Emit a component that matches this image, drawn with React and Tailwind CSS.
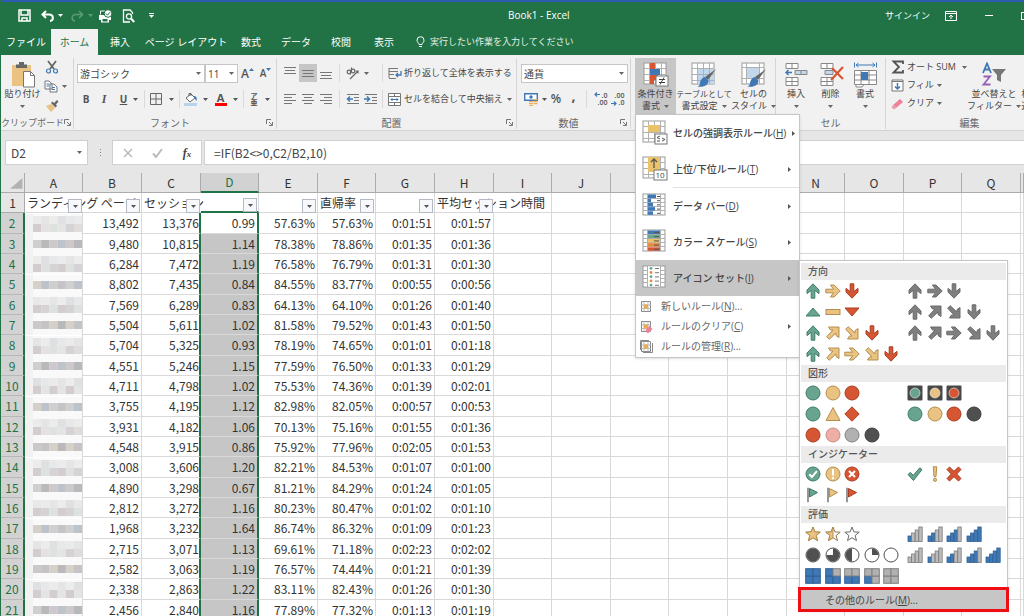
import { useState } from "react";
import clsx from "clsx";

const COLUMNS = ["A", "B", "C", "D", "E", "F", "G", "H", "I", "J", "K", "L", "M", "N", "O", "P", "Q", ""];

const COL_WIDTHS = ["w-[58px]", "w-[59px]", "w-[59px]", "w-[58px]", "w-[59px]"];

const HEADINGS = { A: "ランディング ページ", C: "セッション", F: "直帰率", H: "平均セッション時間" };

const ROWS = [
  ["13,492", "13,376", "0.99", "57.63%", "57.63%", "0:01:51", "0:01:57"],
  ["9,480", "10,815", "1.14", "78.38%", "78.86%", "0:01:35", "0:01:36"],
  ["6,284", "7,472", "1.19", "76.58%", "76.79%", "0:01:31", "0:01:30"],
  ["8,802", "7,435", "0.84", "84.55%", "83.77%", "0:00:55", "0:00:56"],
  ["7,569", "6,289", "0.83", "64.13%", "64.10%", "0:01:26", "0:01:40"],
  ["5,504", "5,611", "1.02", "81.58%", "79.52%", "0:01:43", "0:01:50"],
  ["5,704", "5,325", "0.93", "78.19%", "74.65%", "0:01:01", "0:01:18"],
  ["4,551", "5,246", "1.15", "77.59%", "76.50%", "0:01:33", "0:01:29"],
  ["4,711", "4,798", "1.02", "75.53%", "74.36%", "0:01:39", "0:02:01"],
  ["3,755", "4,195", "1.12", "82.98%", "82.05%", "0:00:57", "0:00:53"],
  ["3,931", "4,182", "1.06", "70.13%", "75.16%", "0:01:55", "0:01:36"],
  ["4,548", "3,915", "0.86", "75.92%", "77.96%", "0:02:05", "0:01:53"],
  ["3,008", "3,606", "1.20", "82.21%", "84.53%", "0:01:07", "0:01:00"],
  ["4,890", "3,298", "0.67", "81.21%", "84.29%", "0:01:24", "0:01:05"],
  ["2,812", "3,272", "1.16", "80.23%", "80.47%", "0:01:02", "0:01:10"],
  ["1,968", "3,232", "1.64", "86.74%", "86.32%", "0:01:09", "0:01:23"],
  ["2,715", "3,071", "1.13", "69.61%", "71.18%", "0:02:23", "0:02:02"],
  ["2,582", "3,063", "1.19", "76.57%", "74.44%", "0:01:21", "0:01:39"],
  ["2,338", "2,863", "1.22", "83.11%", "82.43%", "0:01:26", "0:01:30"],
  ["2,456", "2,840", "1.16", "77.89%", "77.32%", "0:01:13", "0:01:19"],
];

const GREEN = ["#68a490", "#3d7d67"];
const YELLOW = ["#eac282", "#b38f4e"];
const RED = ["#d65532", "#a93f22"];
const GRAY = ["#7f7f7f", "#6a6a6a"];
const BLACK = ["#505050", "#3c3c3c"];
const PINK = ["#edaea5", "#c98d84"];
const SILVER = ["#b1b1b1", "#808080"];
const BLUE = "#3f78b4";

const ICON_SETS = [
  {
    title: "方向",
    rows: [
      [[["arrow", GREEN, 0], ["arrow", YELLOW, 90], ["arrow", RED, 180]],
       [["arrow", GRAY, 0], ["arrow", GRAY, 90], ["arrow", GRAY, 180]]],
      [[["tri", GREEN, 0], ["dash", YELLOW], ["tri", RED, 180]],
       [["arrow", GRAY, 0], ["slant", GRAY, 0], ["slant", GRAY, 90], ["arrow", GRAY, 180]]],
      [[["arrow", GREEN, 0], ["slant", YELLOW, 0], ["slant", YELLOW, 90], ["arrow", RED, 180]],
       [["arrow", GRAY, 0], ["slant", GRAY, 0], ["arrow", GRAY, 90], ["slant", GRAY, 90], ["arrow", GRAY, 180]]],
      [[["arrow", GREEN, 0], ["slant", YELLOW, 0], ["arrow", YELLOW, 90], ["slant", YELLOW, 90], ["arrow", RED, 180]], []],
    ],
  },
  {
    title: "図形",
    rows: [
      [[["circle", GREEN], ["circle", YELLOW], ["circle", RED]],
       [["light", GREEN], ["light", YELLOW], ["light", RED]]],
      [[["circle", GREEN], ["bigTri", YELLOW], ["diamond", RED]],
       [["circle", GREEN], ["circle", YELLOW], ["circle", RED], ["circle", BLACK]]],
      [[["circle", RED], ["circle", PINK], ["circle", SILVER], ["circle", BLACK]], []],
    ],
  },
  {
    title: "インジケーター",
    rows: [
      [[["okCircle", GREEN], ["bangCircle", YELLOW], ["noCircle", RED]],
       [["check", GREEN], ["bang", YELLOW], ["cross", RED]]],
      [[["flag", GREEN], ["flag", YELLOW], ["flag", RED]], []],
    ],
  },
  {
    title: "評価",
    rows: [
      [[["star", YELLOW, 16], ["star", YELLOW, 8], ["star", YELLOW, 0]],
       [["bars", null, 1], ["bars", null, 2], ["bars", null, 3], ["bars", null, 4]]],
      [[["pie", BLACK, 4], ["pie", BLACK, 3], ["pie", BLACK, 2], ["pie", BLACK, 1], ["pie", BLACK, 0]],
       [["bars", null, 0], ["bars", null, 1], ["bars", null, 2], ["bars", null, 3], ["bars", null, 4]]],
      [[["boxes", null, 4], ["boxes", null, 3], ["boxes", null, 2], ["boxes", null, 1], ["boxes", null, 0]], []],
    ],
  },
];

const STAR = "M8 1l1.9 4.9 5.3.3-4.1 3.3 1.4 5.1L8 11.7l-4.5 2.9 1.4-5.1L.8 6.2l5.3-.3z";
const PIES = [
  "",
  "M8 8V1.5A6.5 6.5 0 0 1 14.5 8z",
  "M8 1.5A6.5 6.5 0 0 0 8 14.5z",
  "M8 8V1.5A6.5 6.5 0 1 1 1.5 8z",
  "M8 1.5a6.5 6.5 0 1 0 .01 0z",
];

function Glyph({ kind, color, value }) {
  const [fill, stroke] = color || [];
  const paint = { fill, stroke, strokeWidth: 1 };
  let body = null;

  if (kind === "arrow") {
    body = (
      <path
        d="M8 .8l6 6.2v3.6L9.8 7.4v7.8H6.2V7.4L2 10.6V7z"
        transform={`rotate(${value} 8 8)`}
        {...paint}
      />
    );
  }
  if (kind === "slant") {
    body = (
      <path
        d="M3.500 2H14v10.500l-3-2V8L4.200 14.300 1.700 11.800 8 5H5.500z"
        transform={`rotate(${value} 8 8)`}
        {...paint}
      />
    );
  }
  if (kind === "tri") body = <path d="M8 4l7 8H1z" transform={`rotate(${value} 8 8)`} {...paint} />;
  if (kind === "dash") body = <rect x="1" y="5.5" width="14" height="5" {...paint} />;
  if (kind === "circle") body = <circle cx="8" cy="8" r="7" {...paint} />;
  if (kind === "bigTri") body = <path d="M8 1.5L15 14.5H1z" {...paint} />;
  if (kind === "diamond") body = <path d="M8 .8L15.2 8 8 15.2.8 8z" {...paint} />;
  if (kind === "light") {
    body = (
      <>
        <rect x=".5" y=".5" width="15" height="15" rx="1" fill="#484848" />
        <circle cx="8" cy="8" r="5" fill={fill} stroke="#f1f1f1" strokeWidth=".6" />
      </>
    );
  }
  if (kind === "okCircle") {
    body = (
      <>
        <circle cx="8" cy="8" r="7" {...paint} />
        <path d="M4.3 8.3l2.6 2.7 5-5.8" fill="none" stroke="#fff" strokeWidth="2" />
      </>
    );
  }
  if (kind === "bangCircle") {
    body = (
      <>
        <circle cx="8" cy="8" r="7" {...paint} />
        <path d="M8 3v6.5M8 11v2.2" stroke="#fff" strokeWidth="2" />
      </>
    );
  }
  if (kind === "noCircle") {
    body = (
      <>
        <circle cx="8" cy="8" r="7" {...paint} />
        <path d="M5 5l6 6M11 5l-6 6" stroke="#fff" strokeWidth="2" />
      </>
    );
  }
  if (kind === "check") body = <path d="M1 8.5l2.3-2 3 2.8 6.5-7.5 2.2 1.8L6.5 14.5z" {...paint} />;
  if (kind === "bang") {
    body = (
      <>
        <path d="M6.3.7h3.4l-.7 10H7z" {...paint} />
        <circle cx="8" cy="13.8" r="1.6" {...paint} />
      </>
    );
  }
  if (kind === "cross") {
    body = <path d="M1 3.5L3.5 1 8 5.3 12.5 1 15 3.5 10.7 8l4.3 4.5-2.5 2.5L8 10.7 3.5 15 1 12.5 5.3 8z" {...paint} />;
  }
  if (kind === "flag") {
    body = (
      <>
        <path d="M4.5 1.5L12.5 5.5l-8 4.5z" {...paint} />
        <path d="M3 .8v14.5" stroke="#6a6a6a" strokeWidth="1.4" />
      </>
    );
  }
  if (kind === "star") {
    body = (
      <>
        <path d={STAR} fill="#fff" stroke={value ? "#8f7a50" : "#6a6a6a"} />
        {value === 16 && <path d={STAR} {...paint} />}
        {value === 8 && <path d="M8 1v10.7l-4.5 2.9 1.4-5.1L.8 6.2l5.3-.3z" {...paint} />}
      </>
    );
  }
  if (kind === "pie") {
    body = (
      <>
        <circle cx="8" cy="8" r="7" fill="#fff" stroke="#505050" />
        <path d={PIES[value]} fill="#505050" />
      </>
    );
  }
  if (kind === "bars") {
    body = [0, 1, 2, 3].map((i) => (
      <rect
        key={i}
        x={1 + i * 3.6}
        y={10 - i * 3}
        width="3.4"
        height={5.5 + i * 3}
        fill={i < value ? BLUE : "#bcbcbc"}
        stroke={i < value ? "#2f6096" : "#7c7c7c"}
        strokeWidth=".8"
      />
    ));
  }
  if (kind === "boxes") {
    // the quarters fill up from the bottom left
    const order = [[0.7, 8], [8, 8], [0.7, 0.7], [8, 0.7]];
    body = order.map(([x, y], i) => (
      <rect
        key={i}
        x={x}
        y={y}
        width="7.3"
        height="7.3"
        fill={i < value ? BLUE : "#b1b1b1"}
        stroke={i < value ? "#2f6096" : "#808080"}
      />
    ));
  }

  return (
    <svg viewBox="0 0 16 16" className="size-4">
      {body}
    </svg>
  );
}

function Caret({ className }) {
  return (
    <svg viewBox="0 0 5 3" className={clsx("h-[3px] w-[5px] shrink-0", className)} fill="currentColor">
      <path d="M0 0h5L2.5 3z" />
    </svg>
  );
}

function Divider() {
  return <span className="h-[18px] w-px shrink-0 bg-[#dadada]" />;
}

function Tool({ label, className, children }) {
  return (
    <button type="button" aria-label={label} className={clsx("flex h-[18px] shrink-0 items-center justify-center", className)}>
      {children}
    </button>
  );
}

function Group({ label, className, launcher, small, children }) {
  return (
    <section className={clsx("flex shrink-0 flex-col border-r border-[#d5d5d5]", className)}>
      <div className="flex-1">{children}</div>
      <div className={clsx("flex h-[13px] items-center leading-3 text-[#666]", small ? "text-[9px]" : "text-[10px]")}>
        <span className="flex-1 text-center whitespace-nowrap">{label}</span>
        {launcher && (
          <button type="button" aria-label={`${label}の設定`} className="mr-[3px]">
            <svg viewBox="0 0 7 7" className="size-[7px]" fill="none" stroke="#777">
              <path d="M.5 5V.5H5M3 3l3 3M6.5 3v3.5H3" />
            </svg>
          </button>
        )}
      </div>
    </section>
  );
}

function Lines({ rows }) {
  return (
    <svg viewBox="0 0 12 12" className="size-3" stroke="#777" strokeWidth="1">
      {rows.map(([x1, x2, y]) => (
        <path key={y} d={`M${x1} ${y}.5H${x2}`} />
      ))}
    </svg>
  );
}

// small worksheet outline shared by the ribbon and menu icons
function Sheet({ className, cols = [6, 12, 18], rows = [6, 12, 18], children }) {
  return (
    <svg viewBox="0 0 26 26" className={clsx("shrink-0", className || "size-[26px]")}>
      <rect x="1" y="1" width="22" height="21" fill="#fff" stroke="#999" />
      {cols.map((x) => <path key={`c${x}`} d={`M${x}.5 1v21`} stroke="#b0b0b0" />)}
      {rows.map((y) => <path key={`r${y}`} d={`M1 ${y}.5h22`} stroke="#b0b0b0" />)}
      {children}
    </svg>
  );
}

function Brush() {
  return (
    <>
      <path d="M25 7l-8 11-3-3z" fill="#666" />
      <path d="M14 15l3.500 3.500c0 5-5 7-11 6 3-1 2-3 3-5.500 1-2.500 2.500-3.500 4.500-4z" fill={BLUE} />
    </>
  );
}

function BigButton({ icon, lines, active, className, small }) {
  return (
    <button
      type="button"
      className={clsx(
        "flex h-[56px] shrink-0 flex-col items-center pt-1 leading-3 whitespace-nowrap text-[#444]",
        active && "bg-[#c6c6c6]",
        className
      )}
    >
      {icon}
      <span className={small ? "text-[8px]" : "text-[9px]"}>{lines[0]}</span>
      <span className="flex h-3 items-center gap-1 text-[9px]">
        {lines[1]}
        <Caret className="text-[#666]" />
      </span>
    </button>
  );
}

function TitleBar() {
  return (
    <header className="flex h-[27px] items-center text-[10px] text-white">
      <div className="flex w-[507px] shrink-0 items-center pl-[17px]">
        <button type="button" aria-label="上書き保存">
          <svg viewBox="0 0 13 13" className="size-[13px]" fill="none" stroke="#fff" strokeWidth="1.500">
            <path d="M1 1h11v11H1zM3 1v5h7V1M4 12V9h5v3" />
          </svg>
        </button>
        <button type="button" aria-label="元に戻す" className="ml-[10px] flex items-center gap-1">
          <svg viewBox="0 0 13 12" className="h-3 w-[13px]" fill="none" stroke="#fff" strokeWidth="2">
            <path d="M5 1L1.500 4.500 5 8M2 4.500h6c5 0 5 6 1 6.500" />
          </svg>
          <Caret />
        </button>
        <button type="button" aria-label="やり直し" className="ml-2 flex items-center gap-1 text-[#5e9a78]">
          <svg viewBox="0 0 13 12" className="h-3 w-[13px]" fill="none" stroke="currentColor" strokeWidth="1.500">
            <path d="M8 1l3.500 3.500L8 8M11 4.500H5c-5 0-5 6-1 6.500" />
          </svg>
          <Caret />
        </button>
        <button type="button" aria-label="クイック印刷" className="ml-[5px]">
          <svg viewBox="0 0 14 14" className="size-[14px]">
            <path d="M1 6h12v5h-2v2.500H3V11H1z" fill="#fff" />
            <path d="M4.500 10h5v2.500h-5z" fill="#217346" />
            <path d="M2.500 5.500V2H7" fill="none" stroke="#fff" />
            <circle cx="10" cy="4.500" r="3.800" fill="#fff" stroke="#217346" />
            <path d="M8 4.500l1.500 1.700 2.500-3" fill="none" stroke="#217346" />
          </svg>
        </button>
        <button type="button" aria-label="印刷プレビュー" className="ml-[10px]">
          <svg viewBox="0 0 13 14" className="h-[14px] w-[13px]" fill="none" stroke="#fff" strokeWidth="1.300">
            <path d="M10.500 5V3.500L8 1H1.500v12H8" />
            <circle cx="7" cy="7.500" r="2.600" />
            <path d="M9 9.500l3.200 3.500" strokeWidth="2" />
          </svg>
        </button>
        <button type="button" aria-label="カスタマイズ" className="ml-[14px] flex flex-col items-center gap-px">
          <span className="h-px w-[5px] bg-white" />
          <Caret />
        </button>
      </div>
      <h1 className="whitespace-nowrap">Book1 - Excel</h1>
      <div className="ml-auto flex items-center">
        <button type="button" className="text-[9px] whitespace-nowrap">サインイン</button>
        <button type="button" aria-label="リボンの表示オプション" className="ml-[15px]">
          <svg viewBox="0 0 12 10" className="h-[10px] w-3" fill="none" stroke="#fff">
            <path d="M.5.5h11v9H.5zM.5 2.500h11M6 8V4M4 6l2-2 2 2" />
          </svg>
        </button>
        <button type="button" aria-label="最小化" className="ml-7 h-px w-2 bg-white" />
        <button type="button" aria-label="最大化" className="ml-7 h-2 w-[3px] border border-r-0 border-white" />
      </div>
    </header>
  );
}

function Tabs({ tab, setTab }) {
  const tabs = [
    ["ファイル", "w-[50px]"],
    ["ホーム", "w-[47px]"],
    ["挿入", "w-[44px]"],
    ["ページ レイアウト", "w-[88px]"],
    ["数式", "w-[42px]"],
    ["データ", "w-[48px]"],
    ["校閲", "w-[42px]"],
    ["表示", "w-[44px]"],
  ];
  return (
    <nav className="flex h-[26px] text-[10px] text-white">
      {tabs.map(([name, width]) => (
        <button
          key={name}
          type="button"
          onClick={() => setTab(name)}
          className={clsx("shrink-0 text-center whitespace-nowrap", width, name === tab && "bg-[#f1f1f1] text-[#217346]")}
        >
          {name}
        </button>
      ))}
      <button type="button" className="ml-[10px] flex items-center gap-[5px] text-[9px] whitespace-nowrap text-[#e4f0e8]">
        <svg viewBox="0 0 9 12" className="h-3 w-[9px]" fill="none" stroke="#fff">
          <path d="M3 8.500C3 7 1 6.500 1 4.200a3.500 3.500 0 0 1 7 0C8 6.500 6 7 6 8.500zM3 10.500h3" />
        </svg>
        実行したい作業を入力してください
      </button>
    </nav>
  );
}

function Combo({ label, value, className }) {
  return (
    <span className={clsx("relative block h-[19px] shrink-0 border border-[#c6c6c6] bg-white", className)}>
      <select aria-label={label} className="block h-full w-full appearance-none pl-[2px] text-[10px] leading-4 text-[#444] outline-none">
        <option>{value}</option>
      </select>
      <Caret className="pointer-events-none absolute top-[7px] right-[3px] text-[#666]" />
    </span>
  );
}

function ClipboardGroup() {
  return (
    <Group label="クリップボード" launcher small className="w-[73px]">
      <div className="flex">
        <button type="button" className="flex w-[43px] flex-col items-center pt-1 text-[9px] leading-3 whitespace-nowrap text-[#444]">
          <svg viewBox="0 0 24 26" className="h-[26px] w-6">
            <rect x="1" y="3" width="19" height="21" fill="#eac282" />
            <path d="M5 6V2.500h3V0h5v2.500h3V6z" fill="#666" />
            <path d="M12.500 9.500h7l4 4V25h-11z" fill="#fff" stroke="#777" />
            <path d="M19.500 9.500v4h4" fill="none" stroke="#777" />
          </svg>
          貼り付け
          <Caret className="mt-[5px] text-[#666]" />
        </button>
        <div className="flex flex-col gap-px">
          <Tool label="切り取り" className="w-[15px]">
            <svg viewBox="0 0 14 14" className="size-[14px]" fill="none">
              <path d="M3 1l6 8M11 1L5 9" stroke="#666" strokeWidth="1.800" />
              <circle cx="3.500" cy="11" r="2" stroke={BLUE} strokeWidth="1.200" />
              <circle cx="10.500" cy="11" r="2" stroke={BLUE} strokeWidth="1.200" />
            </svg>
          </Tool>
          <Tool label="コピー" className="gap-1">
            <svg viewBox="0 0 14 13" className="h-[13px] w-[14px]" fill="#fff" stroke="#777">
              <path d="M1 1h4l3 3v5H1zM6 4h4l3 3v5H6z" />
              <path d="M2.500 4h3M2.500 6h3M8 7.500h3M8 9.500h3" stroke={BLUE} />
            </svg>
            <Caret className="text-[#666]" />
          </Tool>
          <Tool label="書式のコピー" className="w-[15px]">
            <svg viewBox="0 0 14 13" className="h-[13px] w-[14px]">
              <path d="M1 7l5-2 4 4-4 4z" fill="#eac282" />
              <path d="M6 4l1.500-1.500L9 4l3-3 1.500 1.500L11 5.500 12 7l-1.500 1.500z" fill="#666" />
            </svg>
          </Tool>
        </div>
      </div>
    </Group>
  );
}

function FontGroup() {
  return (
    <Group label="フォント" launcher className="w-[203px]">
      <div className="flex items-center pt-[6px] pl-[3px]">
        <Combo label="フォント" value="游ゴシック" className="w-[128px]" />
        <Combo label="フォント サイズ" value="11" className="w-[33px]" />
        <Tool label="拡大" className="w-[19px] text-[12px] font-semibold text-[#555]">
          A<Caret className="mb-2 rotate-180 text-[#3f78b4]" />
        </Tool>
        <Tool label="縮小" className="w-[17px] text-[10px] font-semibold text-[#555]">
          A<Caret className="mb-2 text-[#3f78b4]" />
        </Tool>
      </div>
      <div className="flex items-center pt-[7px] pl-[3px] text-[10px] text-[#555]">
        <Tool label="太字" className="w-[18px] font-bold">B</Tool>
        <Tool label="斜体" className="w-[18px] font-['Liberation_Serif',serif] text-[12px] font-bold italic">I</Tool>
        <Tool label="下線" className="w-[28px] gap-[6px] pl-1 font-bold">
          <span className="underline">U</span>
          <Caret />
        </Tool>
        <span className="w-1" />
        <Divider />
        <Tool label="罫線" className="w-[34px] gap-[7px]">
          <svg viewBox="0 0 12 12" className="size-3" fill="none" stroke="#666">
            <path d="M.5.5h11v11H.5zM6 .5v11M.5 6h11" />
          </svg>
          <Caret />
        </Tool>
        <Divider />
        <Tool label="塗りつぶしの色" className="w-[32px] gap-[5px]">
          <svg viewBox="0 0 14 14" className="size-[14px]">
            <path d="M2 6l5-4 4 4-5 4z" fill="#fff" stroke="#666" />
            <path d="M5 4V1.500h2V4" fill="none" stroke="#666" />
            <path d="M10 4c3 0 3 3 2.500 5-1-1-1-2-2.500-3z" fill={BLUE} />
            <path d="M0 11h13v3H0z" fill="#b8d3ec" />
          </svg>
          <Caret />
        </Tool>
        <Tool label="フォントの色" className="w-[29px] gap-[6px]">
          <span className="w-3 border-b-[3px] border-[#f00] text-center text-[11px] leading-[11px] font-bold">A</span>
          <Caret />
        </Tool>
        <span className="w-1" />
        <Divider />
        <Tool label="ふりがな" className="w-[32px] gap-[7px]">
          <span className="flex flex-col text-[7px] leading-[7px] font-bold">
            <span>ア</span>
            <span>亜</span>
          </span>
          <Caret />
        </Tool>
      </div>
    </Group>
  );
}

function AlignGroup() {
  return (
    <Group label="配置" launcher className="w-[240px]">
      <div className="flex items-center pt-[6px] pl-1">
        <Tool label="上揃え" className="w-[18px]"><Lines rows={[[0, 12, 0], [1, 11, 3], [0, 12, 6]]} /></Tool>
        <Tool label="上下中央揃え" className="w-[18px] bg-[#c6c6c6]"><Lines rows={[[0, 12, 3], [1, 11, 6], [0, 12, 9]]} /></Tool>
        <Tool label="下揃え" className="w-[18px]"><Lines rows={[[0, 12, 5], [1, 11, 8], [0, 12, 11]]} /></Tool>
        <span className="w-1" />
        <Divider />
        <Tool label="方向" className="w-[34px] gap-1 text-[#666]">
          <svg viewBox="0 0 14 13" className="h-[13px] w-[14px]" fill="none" stroke="#666" strokeWidth="1.200">
            <path d="M4 12L12 4M9.500 4H12v2.500" />
            <circle cx="3" cy="5" r="1.800" />
            <circle cx="7" cy="4" r="1.800" />
            <path d="M4.500 3.500v4M5.500.5v4" />
          </svg>
          <Caret />
        </Tool>
        <span className="w-2" />
        <Divider />
        <Tool label="折り返し" className="gap-[2px] pl-[5px] text-[9px] whitespace-nowrap text-[#444]">
          <svg viewBox="0 0 14 13" className="h-[13px] w-[14px]" fill="none" stroke="#777">
            <path d="M1 1.500h9M1 4.500h9M1 7.500h5M1 11.500h7M1 1v10" />
            <path d="M13 4v4H8.500M10 6L8 8l2 2" stroke={BLUE} strokeWidth="1.300" />
          </svg>
          折り返して全体を表示する
        </Tool>
      </div>
      <div className="flex items-center pt-2 pl-1">
        <Tool label="左揃え" className="w-[18px]"><Lines rows={[[0, 12, 1], [0, 8, 4], [0, 12, 7], [0, 8, 10]]} /></Tool>
        <Tool label="中央揃え" className="w-[18px]"><Lines rows={[[0, 12, 1], [2, 10, 4], [0, 12, 7], [2, 10, 10]]} /></Tool>
        <Tool label="右揃え" className="w-[18px]"><Lines rows={[[0, 12, 1], [4, 12, 4], [0, 12, 7], [4, 12, 10]]} /></Tool>
        <span className="w-1" />
        <Divider />
        <Tool label="インデントを減らす" className="ml-1 w-[18px]">
          <svg viewBox="0 0 14 12" className="h-3 w-[14px]" fill="none" stroke="#777">
            <path d="M1 1.500h12M8 4.500h5M8 7.500h5M1 10.500h12" />
            <path d="M7 6H1.500M4 3.500L1.500 6 4 8.500" stroke={BLUE} strokeWidth="1.500" />
          </svg>
        </Tool>
        <Tool label="インデントを増やす" className="w-[18px]">
          <svg viewBox="0 0 14 12" className="h-3 w-[14px]" fill="none" stroke="#777">
            <path d="M1 1.500h12M8 4.500h5M8 7.500h5M1 10.500h12" />
            <path d="M0 6h5.500M3 3.500L5.500 6 3 8.500" stroke={BLUE} strokeWidth="1.500" />
          </svg>
        </Tool>
        <span className="w-[2px]" />
        <Divider />
        <Tool label="セルの結合" className="gap-[3px] pl-[5px] text-[9px] whitespace-nowrap text-[#444]">
          <svg viewBox="0 0 13 13" className="size-[13px]" fill="#fff" stroke="#777">
            <path d="M.5.500h12v12H.5zM.5 3.500h12M.5 9.500h12M6.500.5v3M6.500 9.500v3" />
            <path d="M3 6.500h7M4.500 5L3 6.500 4.500 8M8.500 5L10 6.500 8.500 8" fill="none" stroke={BLUE} />
          </svg>
          セルを結合して中央揃え
          <Caret className="ml-[1px] text-[#666]" />
        </Tool>
      </div>
    </Group>
  );
}

function Decimals({ top, bottom, right }) {
  return (
    <span className="relative flex w-[14px] flex-col text-right text-[7px] leading-[7px] font-semibold">
      <span>{top}</span>
      <span>{bottom}</span>
      <svg
        viewBox="0 0 6 5"
        className={clsx("absolute left-0 h-[5px] w-[6px]", right ? "bottom-0 rotate-180" : "top-0")}
        fill="none"
        stroke={BLUE}
      >
        <path d="M6 2.500H1M3 .5L1 2.500l2 2" strokeWidth="1.200" />
      </svg>
    </span>
  );
}

function NumberGroup() {
  return (
    <Group label="数値" launcher className="w-[114px]">
      <div className="pt-[6px] pr-[2px] pl-1">
        <Combo label="表示形式" value="通貨" />
      </div>
      <div className="flex items-center pt-[7px] pl-[6px] text-[#555]">
        <Tool label="通貨表示形式" className="w-[24px] gap-1">
          <svg viewBox="0 0 14 13" className="h-[13px] w-[14px]">
            <path d="M.7.7h12.600v6.600H.7z" fill="#fff" stroke={BLUE} strokeWidth="1.400" />
            <circle cx="7" cy="4" r="1.700" fill={BLUE} />
            <path d="M5 8h4v1.300H5zM5 10h4v1.300H5zM5 12h4v1H5zM9.500 6h4v1.300h-4zM9.500 8h4v1.300h-4zM9.500 10h4v1.300h-4z" fill="#eab060" />
          </svg>
          <Caret />
        </Tool>
        <Tool label="パーセント" className="w-[18px] text-[12px] font-semibold">%</Tool>
        <Tool label="桁区切り" className="w-[17px] pb-2 text-[14px] font-bold">,</Tool>
        <span className="w-1" />
        <Divider />
        <Tool label="小数点以下の桁数を増やす" className="ml-[5px] w-[17px]"><Decimals top=".0" bottom=".00" /></Tool>
        <Tool label="小数点以下の桁数を減らす" className="w-[17px]"><Decimals top=".00" bottom=".0" right /></Tool>
      </div>
    </Group>
  );
}

function MenuItem({ icon, text, accel, tail, arrow, active, small, children }) {
  return (
    <li className="relative">
      <button
        type="button"
        className={clsx(
          "flex w-full items-center text-left whitespace-nowrap",
          small ? "h-5 gap-2 pl-1 text-[10px] text-[#666]" : "h-9 gap-[5px] pl-[6px] text-[10px] font-medium text-[#444]",
          active && "bg-[#c6c6c6] text-[#222]"
        )}
      >
        {icon}
        <span className="flex-1">
          {text}(<span className="underline">{accel}</span>){tail}
        </span>
        {arrow && <Caret className="mr-[7px] -rotate-90 text-[#555]" />}
      </button>
      {children}
    </li>
  );
}

function IconRow({ icons }) {
  return (
    <button type="button" aria-label="アイコン セット" className="grid h-[21px] w-[98px] grid-cols-5 items-center">
      {icons.map(([kind, color, value], i) => (
        <Glyph key={i} kind={kind} color={color} value={value} />
      ))}
    </button>
  );
}

function IconSetMenu() {
  return (
    <div className="absolute top-0 left-full w-[209px] border border-[#c6c6c6] bg-white px-px pt-[2px] pb-px shadow-sm">
      {ICON_SETS.map((set) => (
        <div key={set.title}>
          <h3 className="h-[17px] bg-[#ebebeb] pl-[7px] text-[10px] leading-4 font-medium text-[#555]">{set.title}</h3>
          <div className="pb-px pl-1">
            {set.rows.map(([left, right], i) => (
              <div key={i} className="flex gap-1">
                <IconRow icons={left} />
                {right.length > 0 && <IconRow icons={right} />}
              </div>
            ))}
          </div>
        </div>
      ))}
      <div className="-mx-[3px] -mb-[3px] border-[3px] border-[#f00e14]">
        <button type="button" className="block h-[19px] w-full bg-[#c6c6c6] pl-6 text-left text-[10px] leading-[18px] text-[#444]">
          その他のルール(<span className="underline">M</span>)...
        </button>
      </div>
    </div>
  );
}

function RuleIcon({ children }) {
  return (
    <svg viewBox="0 0 13 13" className="size-[13px] shrink-0">
      <path d="M1.500 1.500h9v10h-9z" fill="#fff" stroke="#888" />
      <path d="M4 1.500v10M8 1.500v10M1.500 5h9M1.500 8.500h9" stroke="#bbb" />
      <path d="M4 4.500h4v4H4z" fill="#e8ab4d" />
      {children}
    </svg>
  );
}

const SCALE = ["#3f78b4", "#68a490", "#eac26a", "#e8893c", "#d65532"];

function FormatMenu() {
  return (
    <ul className="absolute top-full left-0 z-20 w-[165px] border border-[#c6c6c6] bg-white pb-px shadow-sm">
      <MenuItem
        text="セルの強調表示ルール"
        accel="H"
        arrow
        icon={
          <Sheet>
            <rect x="6" y="5" width="12" height="7" fill="#eac26a" />
            <rect x="13" y="14" width="12" height="10" fill="#fff" stroke="#777" />
            <path d="M18 16l-3 1.500 3 1.500M15 21h3M20 18l3 1.500-3 1.500" fill="none" stroke="#555" />
          </Sheet>
        }
      />
      <MenuItem
        text="上位/下位ルール"
        accel="T"
        arrow
        icon={
          <Sheet>
            <rect x="6" y="1" width="12" height="15" fill="#eac26a" />
            <path d="M12 12V3M9 6l3-3 3 3" fill="none" stroke="#555" strokeWidth="1.300" />
            <rect x="12" y="14" width="13" height="10" fill="#fff" stroke="#777" />
            <text x="13.500" y="22" fontSize="8" fill="#444">10</text>
          </Sheet>
        }
      />
      <li className="ml-[37px] h-px bg-[#e1e1e1]" />
      <MenuItem
        text="データ バー"
        accel="D"
        arrow
        icon={
          <Sheet cols={[5, 18]} rows={[5, 9, 13, 17]}>
            {[8, 3, 5, 7, 5].map((w, i) => (
              <g key={i}>
                <rect x="6" y={1.500 + i * 4.200} width={w} height="3.500" fill={BLUE} />
                <path d={`M15 ${3.500 + i * 4.200}h3`} stroke="#555" />
              </g>
            ))}
          </Sheet>
        }
      />
      <MenuItem
        text="カラー スケール"
        accel="S"
        arrow
        icon={
          <Sheet cols={[5, 18]} rows={[5, 9, 13, 17]}>
            {SCALE.map((color, i) => (
              <g key={color}>
                <rect x="6" y={1.500 + i * 4.200} width="12" height="3.500" fill={color} />
                <path d={`M12 ${3.500 + i * 4.200}h5`} stroke="#555" />
              </g>
            ))}
          </Sheet>
        }
      />
      <MenuItem
        text="アイコン セット"
        accel="I"
        arrow
        active
        icon={
          <Sheet cols={[5, 18]} rows={[5, 9, 13, 17]}>
            <rect x="6" y="1.500" width="12" height="20" fill="#fff" />
            {["#68a490", "#e8893c", "#68a490", "#e8893c", "#68a490"].map((color, i) => (
              <g key={i}>
                <circle cx="9" cy={3.300 + i * 4.200} r="1.400" fill={color} />
                <path d={`M13 ${3.500 + i * 4.200}h4`} stroke="#777" />
              </g>
            ))}
          </Sheet>
        }
      >
        <IconSetMenu />
      </MenuItem>
      <MenuItem small text="新しいルール" accel="N" tail="..." icon={<RuleIcon />} />
      <MenuItem
        small
        text="ルールのクリア"
        accel="C"
        arrow
        icon={<RuleIcon><path d="M5.500 10l4-4 3 3-4 4h-1.500z" fill="#f08098" /></RuleIcon>}
      />
      <MenuItem
        small
        text="ルールの管理"
        accel="R"
        tail="..."
        icon={<RuleIcon><path d="M.5 10V.5H9M3 12.500h9.500V3" fill="none" stroke="#888" /></RuleIcon>}
      />
    </ul>
  );
}

function StyleGroup() {
  return (
    <Group label="" className="w-[145px]">
      <div className="flex pl-[4px]">
        <div className="relative">
          <BigButton
            active
            className="w-[41px]"
            lines={["条件付き", "書式"]}
            icon={
              <Sheet>
                <path d="M7 1h5v6H7zM7 13h8v5H7zM7 18h4v4H7z" fill="#d65532" />
                <path d="M7 7h10v6H7z" fill={BLUE} />
                <rect x="13" y="14" width="12" height="10" fill="#fff" stroke="#777" />
                <path d="M16 17.500h6M16 20.500h6M21 15.500l-4 7" stroke="#444" />
              </Sheet>
            }
          />
          <FormatMenu />
        </div>
        <BigButton
          small
          className="w-[56px]"
          lines={["テーブルとして", "書式設定"]}
          icon={
            <Sheet>
              <path d="M7 7h16v15H7z" fill="#c3d7ea" />
              <path d="M12.500 7v15M18.500 7v15M7 12.500h16M7 18.500h16" stroke="#9fb4c8" />
              <Brush />
            </Sheet>
          }
        />
        <BigButton
          className="w-[43px]"
          lines={["セルの", "スタイル"]}
          icon={
            <Sheet cols={[5, 18]} rows={[5, 16]}>
              <path d="M6 6h12v10H6z" fill="#c3d7ea" />
              <Brush />
            </Sheet>
          }
        />
      </div>
    </Group>
  );
}

function CellGroup() {
  return (
    <Group label="セル" className="w-[110px]">
      <div className="flex pl-[3px]">
        <BigButton
          className="w-[34px]"
          lines={["挿入", ""]}
          icon={
            <svg viewBox="0 0 26 26" className="size-[26px]" fill="#fff" stroke="#888">
              <path d="M3 1.500h12v5H3zM9 1.500v5M3 15.500h12v8H3zM9 15.500v8M3 19.500h12" />
              <path d="M12 8.500h12v4H12zM18 8.500v4" fill="#c3d7ea" />
              <path d="M9 10.500H3M5.500 8L3 10.500 5.500 13" fill="none" stroke={BLUE} strokeWidth="1.500" />
            </svg>
          }
        />
        <BigButton
          className="w-[35px]"
          lines={["削除", ""]}
          icon={
            <svg viewBox="0 0 26 26" className="size-[26px]" fill="#fff" stroke="#888">
              <path d="M3 1.500h12v5H3zM9 1.500v5M3 15.500h12v8H3zM9 15.500v8M3 19.500h12" />
              <path d="M7 8.500h8v4H7z" fill="#c3d7ea" />
              <path d="M14 6l11 11M25 5L13 18" fill="none" stroke="#d65532" strokeWidth="2.200" />
            </svg>
          }
        />
        <BigButton
          className="w-[34px]"
          lines={["書式", ""]}
          icon={
            <svg viewBox="0 0 26 26" className="size-[26px]" fill="#fff" stroke="#888">
              <path d="M2.500 8.500h22v14h-22zM2.500 13h22M2.500 18h22M9 8.500v14M17 8.500v14" />
              <path d="M4 22.500h8l-2 2.500H4z" />
              <path d="M9 10h7v8H9z" fill={BLUE} stroke="none" />
              <path d="M2.500.5v5M24.500.5v5M4 3h19M6.500 1L4 3l2.500 2M20.500 1L23 3l-2.500 2" fill="none" stroke={BLUE} />
            </svg>
          }
        />
      </div>
    </Group>
  );
}

function EditGroup() {
  return (
    <Group label="編集" className="w-[168px]">
      <div className="flex pl-[5px] text-[9px] text-[#444]">
        <div className="w-[81px]">
          <Tool label="オート SUM" className="gap-[2px] whitespace-nowrap">
            <svg viewBox="0 0 14 14" className="size-[14px]" fill="none" stroke="#555" strokeWidth="1.800">
              <path d="M12 4V1.500H2.500L8 7l-5.500 5.500H12V10" />
            </svg>
            オート SUM
            <Caret className="ml-1 text-[#666]" />
          </Tool>
          <Tool label="フィル" className="gap-[3px]">
            <svg viewBox="0 0 13 13" className="size-[13px]" fill="#fff" stroke="#777">
              <path d="M1 1h11v11H1zM1 2.500h11" />
              <path d="M6.500 4v6M4 7.500l2.500 2.500L9 7.500" fill="none" stroke={BLUE} strokeWidth="1.500" />
            </svg>
            フィル
            <Caret className="text-[#666]" />
          </Tool>
          <Tool label="クリア" className="gap-[3px]">
            <svg viewBox="0 0 13 13" className="size-[13px]">
              <path d="M2 8l7-6 3 3-7 6z" fill="#f08098" />
              <path d="M2 8l3 3-1 1H2L.5 10z" fill="#e3a0ae" />
            </svg>
            クリア
            <Caret className="text-[#666]" />
          </Tool>
        </div>
        <BigButton
          className="w-[46px]"
          lines={["並べ替えと", "フィルター"]}
          icon={
            <svg viewBox="0 0 26 26" className="size-[26px]" fill="none">
              <path d="M2 11L6 1.500 10 11M3.500 7.500h5" stroke={BLUE} strokeWidth="1.800" />
              <path d="M2.500 14.500H9L2.500 22.500H9.500" stroke="#9a5fb5" strokeWidth="1.800" />
              <path d="M11 7h14l-5 6v7l-4-2v-5z" fill="#777" />
            </svg>
          }
        />
        <BigButton className="w-[36px]" lines={["検索と", "選択"]} icon={<span className="size-[26px]" />} />
      </div>
    </Group>
  );
}

function FormulaBar() {
  return (
    <div className="flex h-[42px] bg-[#e6e6e6] pt-[9px] pb-2 pl-1 text-[12px] text-[#444]">
      <div className="relative w-[83px] shrink-0 border border-[#d0d0d0] bg-white">
        <input aria-label="名前ボックス" defaultValue="D2" className="h-full w-full pl-[5px] outline-none" />
        <Caret className="absolute top-[10px] right-[5px] text-[#666]" />
      </div>
      <div className="flex w-6 shrink-0 flex-col items-center justify-center gap-[2px]">
        <span className="size-px bg-[#888]" />
        <span className="size-px bg-[#888]" />
        <span className="size-px bg-[#888]" />
      </div>
      <div className="flex w-[90px] shrink-0 items-center justify-around border border-[#d0d0d0] bg-white">
        <button type="button" aria-label="キャンセル">
          <svg viewBox="0 0 10 10" className="size-[10px]" stroke="#bbb" strokeWidth="1.500">
            <path d="M1 1l8 8M9 1L1 9" />
          </svg>
        </button>
        <button type="button" aria-label="入力">
          <svg viewBox="0 0 11 10" className="h-[10px] w-[11px]" fill="none" stroke="#bbb" strokeWidth="2">
            <path d="M1 5.500L4 9l6-8" />
          </svg>
        </button>
        <button type="button" aria-label="関数の挿入" className="font-['Liberation_Serif',serif] text-[12px] font-bold italic">
          f<span className="text-[9px]">x</span>
        </button>
      </div>
      <input
        aria-label="数式バー"
        defaultValue="=IF(B2<>0,C2/B2,10)"
        className="ml-[2px] min-w-0 flex-1 border border-r-0 border-[#d0d0d0] bg-white pl-[9px] outline-none"
      />
    </div>
  );
}

const LIGHT = ["#ebebeb", "#e4e5e4", "#ecedeb", "#dfe0e1", "#e6e8ea"];
const MID = ["#d3cdcf", "#e3e1e1", "#dee2df", "#e4e4e4", "#d6d3d6", "#e0dcdb"];
const DARK = ["#c4c3c6", "#cfcfcf", "#b9b9bb", "#d5d0c8", "#bcc3cb", "#cdc9ca"];

// pixelated page path
function Mosaic({ row }) {
  const cells = [0, 1, 2, 3, 4, 5];
  const odd = row % 2 === 1;
  return (
    <svg viewBox="0 0 57 20" preserveAspectRatio="none" className="block h-5 w-full">
      <rect width="57" height="20" fill="#f9f9f9" />
      <rect width="8" height="20" fill="#f2f2f2" />
      {cells.map((i) => {
        const x = 8 + i * 8.200;
        if (odd) return <rect key={i} x={x} y="6" width="8.300" height="8" fill={DARK[(i * i + row) % 6]} />;
        return (
          <g key={i}>
            <rect x={x} y="2" width="8.300" height="8" fill={LIGHT[(i + row) % 5]} />
            <rect x={x} y="10" width="8.300" height="8" fill={MID[(i * (row % 5 || 1)) % 6]} />
          </g>
        );
      })}
    </svg>
  );
}

function FilterButton({ column }) {
  return (
    <button
      type="button"
      aria-label={`${column} 列のフィルター`}
      className="absolute right-px -bottom-px z-10 flex size-[14px] items-center justify-center border border-[#b4bac4] bg-[#f6f8fb]"
    >
      <Caret className="text-[#555]" />
    </button>
  );
}

function Grid() {
  return (
    <table className="w-full table-fixed border-separate border-spacing-0 bg-white text-[12px] leading-4 text-[#333]">
      <colgroup>
        <col className="w-6" />
        {COLUMNS.map((c, i) => (
          <col key={c} className={c ? COL_WIDTHS[i % 5] : undefined} />
        ))}
      </colgroup>
      <thead>
        <tr className="h-5 bg-[#e6e6e6]">
          <th className="border-r border-b border-[#ababab] p-0">
            <svg viewBox="0 0 22 18" className="ml-auto h-[18px] w-[18px]">
              <path d="M20 3v13H5z" fill="#b2b2b2" />
            </svg>
          </th>
          {COLUMNS.map((c) => (
            <th
              key={c}
              scope="col"
              className={clsx(
                "border-r p-0 font-normal",
                c === "D"
                  ? "border-b-2 border-r-[#ababab] border-b-[#217346] bg-[#d2d2d2] text-[#217346]"
                  : "border-b border-[#ababab]"
              )}
            >
              {c}
            </th>
          ))}
        </tr>
      </thead>
      <tbody>
        <tr className="h-5">
          <th scope="row" className="border-r border-b border-[#ababab] bg-[#e6e6e6] p-0 font-normal">1</th>
          {COLUMNS.map((c) => (
            <td
              key={c}
              className={clsx(
                "relative border-b p-0",
                c === "D" ? "border-b-2 border-b-[#217346]" : "border-[#d9d9d9]",
                !["A", "C", "H"].includes(c) && "border-r border-r-[#d9d9d9]"
              )}
            >
              {HEADINGS[c] && (
                <span
                  className={clsx(
                    "absolute top-[2px] left-[2px] overflow-hidden whitespace-nowrap",
                    c === "A" && "w-[114px]"
                  )}
                >
                  {HEADINGS[c]}
                </span>
              )}
              {c && c <= "H" && <FilterButton column={c} />}
            </td>
          ))}
        </tr>
        {ROWS.map((row, r) => (
          <tr key={r} className={r % 3 === 0 ? "h-[21px]" : "h-5"}>
            <th
              scope="row"
              className="border-r-2 border-b border-r-[#217346] border-b-[#b8b8b8] bg-[#d2d2d2] p-0 font-normal text-[#217346]"
            >
              {r + 2}
            </th>
            {COLUMNS.map((c, i) => (
              <td
                key={c}
                className={clsx(
                  "p-0 text-right",
                  i > 0 && "border-b border-b-[#d9d9d9]",
                  c === "C" || c === "D" ? "border-r-2 border-r-[#217346]" : "border-r border-r-[#d9d9d9]",
                  c === "D" && r > 0 && "border-b-[#b4b4b4] bg-[#c6c6c6]",
                  i > 0 && (c === "C" ? "pr-0" : "pr-[2px]")
                )}
              >
                {i === 0 ? <Mosaic row={r} /> : row[i - 1]}
              </td>
            ))}
          </tr>
        ))}
      </tbody>
    </table>
  );
}

export default function App() {
  const [tab, setTab] = useState("ホーム");

  return (
    <div className="h-screen overflow-hidden border-l border-[#217346] bg-white font-['Open_Sans','Noto_Sans_CJK_JP',sans-serif]">
      <div className="h-[2px] bg-[#2f5bb0]" />
      <div className="bg-[#217346]">
        <TitleBar />
        <Tabs tab={tab} setTab={setTab} />
      </div>
      <div className="flex h-[76px] border-b border-[#d2d2d2] bg-[#f1f1f1] pt-[3px] pb-px">
        <ClipboardGroup />
        <FontGroup />
        <AlignGroup />
        <NumberGroup />
        <StyleGroup />
        <CellGroup />
        <EditGroup />
      </div>
      <div className="font-['Noto_Sans_CJK_JP',sans-serif]">
        <FormulaBar />
        <Grid />
      </div>
    </div>
  );
}
